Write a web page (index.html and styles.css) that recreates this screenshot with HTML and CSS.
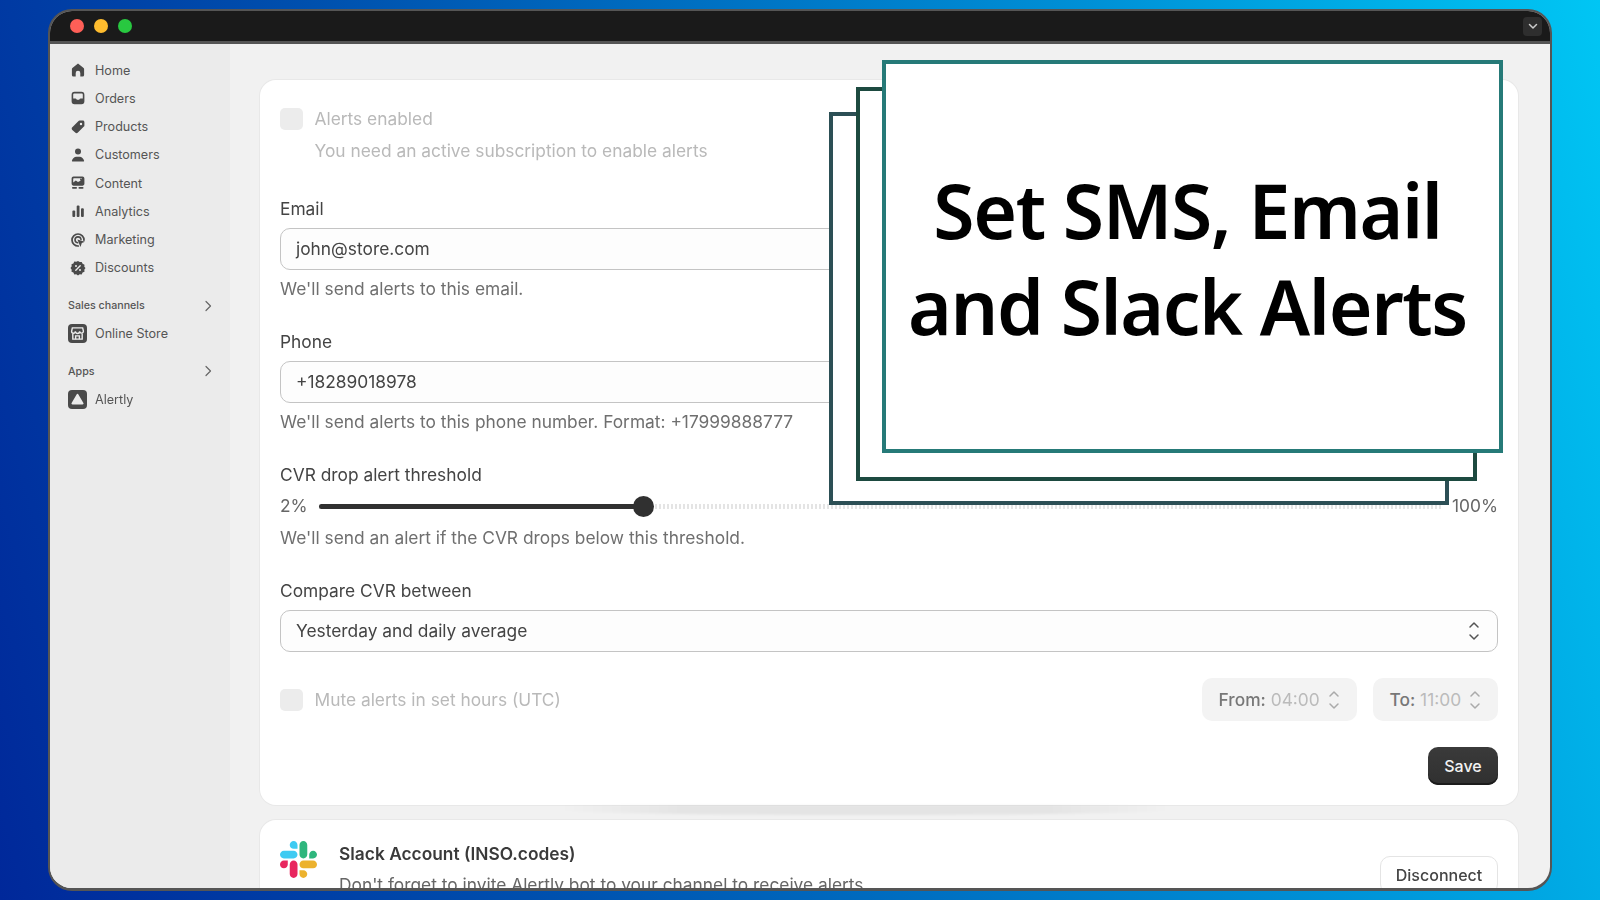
FILE: index.html
```html
<!DOCTYPE html>
<html lang="en">
<head>
<meta charset="utf-8">
<title>Alertly</title>
<link rel="stylesheet" href="styles.css">
</head>
<body>
<div class="window">
  <header class="titlebar">
    <span class="light red"></span><span class="light yellow"></span><span class="light green"></span>
    <span class="tb-menu"><svg width="12" height="12" viewBox="0 0 12 12"><path d="M2.500 4.500 6 8l3.500-3.500" fill="none" stroke="#ccc" stroke-width="1.500" stroke-linecap="round" stroke-linejoin="round"/></svg></span>
  </header>
  <div class="app">
    <nav class="sidebar">
      <a class="nav-item"><svg class="ico" viewBox="0 0 16 16"><path d="M8 1.600 13.600 6c.3.3.5.6.5 1v6a1.600 1.600 0 0 1-1.600 1.600h-2.200V11a2.300 2.300 0 0 0-4.600 0v3.600H3.500A1.600 1.600 0 0 1 1.900 13V7c0-.4.2-.7.5-1z"/></svg>Home</a>
      <a class="nav-item"><svg class="ico" viewBox="0 0 16 16"><path fill-rule="evenodd" d="M4.500 1.800h7A2.900 2.900 0 0 1 14.400 4.700v6.600a2.900 2.900 0 0 1-2.900 2.900h-7a2.900 2.900 0 0 1-2.900-2.900V4.700a2.900 2.900 0 0 1 2.900-2.900zM4.400 3.400c-.7 0-1.200.5-1.200 1.200v3.900h2.300c.4 0 .7.2.9.5l.4.7h2.400l.4-.7c.2-.3.5-.5.9-.5h2.300V4.600c0-.7-.5-1.200-1.200-1.200z"/></svg>Orders</a>
      <a class="nav-item"><svg class="ico" viewBox="0 0 16 16"><path fill-rule="evenodd" d="M9.600 1.600h3.200c.9 0 1.600.7 1.600 1.600v3.200c0 .5-.2.9-.5 1.200l-6 6c-.8.8-2 .8-2.700 0L2.300 11c-.8-.8-.8-2 0-2.700l6-6c.3-.4.8-.7 1.300-.7zM11 3.800a1.200 1.200 0 1 0 0 2.400 1.200 1.200 0 0 0 0-2.400z"/></svg>Products</a>
      <a class="nav-item"><svg class="ico" viewBox="0 0 16 16"><circle cx="8" cy="4.600" r="3"/><path d="M2.400 14.400c-.4 0-.6-.3-.5-.7.5-2.300 2.400-4 4.600-4h3c2.200 0 4.100 1.700 4.600 4 .1.4-.1.7-.5.7z"/></svg>Customers</a>
      <a class="nav-item"><svg class="ico" viewBox="0 0 16 16"><path fill-rule="evenodd" d="M3.500 1.600h9c1 0 1.900.9 1.900 1.900v5.300c0 1-.9 1.900-1.900 1.900h-9c-1 0-1.900-.9-1.900-1.900V3.500c0-1 .9-1.900 1.900-1.900zM3.200 7.400 5.800 5.400l2.200 1.700 2-1 .6-.3-.6-1.400a1 1 0 1 1 2 0V3.300H3.800c-.3 0-.6.300-.6.600z"/><rect x="2" y="12" width="5" height="1.700" rx=".8"/><rect x="8.500" y="12" width="5" height="1.700" rx=".8"/></svg>Content</a>
      <a class="nav-item"><svg class="ico" viewBox="0 0 16 16"><rect x="2.400" y="7.600" width="2.800" height="6.400" rx="1"/><rect x="6.700" y="2.400" width="2.800" height="11.600" rx="1"/><rect x="11" y="5.200" width="2.800" height="8.800" rx="1"/></svg>Analytics</a>
      <a class="nav-item"><svg class="ico" viewBox="0 0 16 16"><path d="M8.300 14A6 6 0 1 1 14 8.200" fill="none" stroke="currentColor" stroke-width="1.700" stroke-linecap="round"/><path d="M7.600 10.800A3 3 0 1 1 11 7.500" fill="none" stroke="currentColor" stroke-width="1.600" stroke-linecap="round"/><path d="M7.400 7.400 15 9.800l-3.200 1.300L10.500 15z"/></svg>Marketing</a>
      <a class="nav-item"><svg class="ico" viewBox="0 0 16 16"><path d="m8 .9 1.700 1.200 2-.2.900 1.900 1.900.9-.2 2L15.500 8l-1.200 1.700.2 2-1.900.9-.9 1.900-2-.2L8 15.500l-1.700-1.200-2 .2-.9-1.900-1.900-.9.2-2L.5 8l1.200-1.700-.2-2 1.900-.9.9-1.900 2 .2z"/><path d="m5.800 10.200 4.400-4.400" stroke="#ebebeb" stroke-width="1.400" stroke-linecap="round"/><circle cx="6" cy="6.100" r="1" fill="#ebebeb"/><circle cx="10" cy="9.900" r="1" fill="#ebebeb"/></svg>Discounts</a>

      <div class="nav-head">Sales channels<svg class="chev" viewBox="0 0 10 12"><path d="M3 1.500 7.500 6 3 10.500"/></svg></div>
      <a class="nav-item app-item"><span class="tile"><svg width="15" height="15" viewBox="0 0 16 16" fill="none" stroke="#ebebeb" stroke-width="1.500"><path d="M2.500 2h11l.8 3.500a2 2 0 0 1-4 .2 2.300 2.300 0 0 1-4.600 0 2 2 0 0 1-4 0z"/><path d="M3 8v6h10V8"/><path d="M6 14v-3.500h4V14"/></svg></span>Online Store</a>

      <div class="nav-head">Apps<svg class="chev" viewBox="0 0 10 12"><path d="M3 1.500 7.500 6 3 10.500"/></svg></div>
      <a class="nav-item app-item"><span class="tile"><svg width="13" height="12" viewBox="0 0 13 12"><path d="M5.600 1.400a1 1 0 0 1 1.800 0l5 8.600a1 1 0 0 1-.9 1.500h-10a1 1 0 0 1-.9-1.500z" fill="#ebebeb"/></svg></span>Alertly</a>
    </nav>

    <main class="main">
      <section class="card form-card">
        <div class="check-row muted"><span class="checkbox"></span>Alerts enabled</div>
        <p class="check-note muted">You need an active subscription to enable alerts</p>

        <div class="label first-label">Email</div>
        <div class="input">john@store.com</div>
        <p class="help">We'll send alerts to this email.</p>

        <div class="label">Phone</div>
        <div class="input">+18289018978</div>
        <p class="help">We'll send alerts to this phone number. Format: +17999888777</p>

        <div class="label">CVR drop alert threshold</div>
        <div class="slider">
          <span class="slider-end">2%</span>
          <div class="track">
            <div class="fill" style="width: 325px"></div>
            <span class="thumb"></span>
          </div>
          <span class="slider-end">100%</span>
        </div>
        <p class="help help-slider">We'll send an alert if the CVR drops below this threshold.</p>

        <div class="label">Compare CVR between</div>
        <div class="input select">Yesterday and daily average
          <svg class="updown" viewBox="0 0 12 20"><path d="M2 6l4-4 4 4M2 14l4 4 4-4"/></svg>
        </div>

        <div class="mute-row">
          <div class="check-row muted"><span class="checkbox"></span>Mute alerts in set hours (UTC)</div>
          <div class="pill pill-from"><b>From:</b>&nbsp;<span>04:00</span><svg class="updown light-arrows" viewBox="0 0 12 20"><path d="M2 6l4-4 4 4M2 14l4 4 4-4"/></svg></div>
          <div class="pill pill-to"><b>To:</b>&nbsp;<span>11:00</span><svg class="updown light-arrows" viewBox="0 0 12 20"><path d="M2 6l4-4 4 4M2 14l4 4 4-4"/></svg></div>
        </div>

        <div class="save-row"><button class="save">Save</button></div>
      </section>

      <section class="card slack-card">
        <svg class="slack" viewBox="0 0 122.800 122.800">
          <path fill="#e8265e" d="M25.800 77.600c0 7.100-5.800 12.900-12.900 12.900S0 84.700 0 77.600s5.800-12.900 12.900-12.900h12.900v12.900zM32.300 77.600c0-7.100 5.800-12.900 12.900-12.900s12.900 5.800 12.900 12.900v32.300c0 7.100-5.800 12.900-12.900 12.900s-12.900-5.800-12.900-12.900V77.600z"/>
          <path fill="#3ecbf2" d="M45.200 25.800c-7.100 0-12.900-5.800-12.900-12.900S38.100 0 45.200 0s12.900 5.800 12.900 12.900v12.900H45.200zM45.200 32.300c7.100 0 12.900 5.800 12.900 12.900s-5.800 12.900-12.900 12.900H12.900C5.800 58.100 0 52.300 0 45.200s5.800-12.900 12.900-12.900h32.300z"/>
          <path fill="#2eb67d" d="M97 45.200c0-7.100 5.800-12.900 12.900-12.900s12.900 5.800 12.900 12.900-5.800 12.900-12.900 12.900H97V45.200zM90.500 45.200c0 7.100-5.800 12.900-12.900 12.900s-12.900-5.800-12.900-12.900V12.900C64.700 5.800 70.500 0 77.600 0s12.900 5.800 12.900 12.900v32.300z"/>
          <path fill="#ecb22e" d="M77.600 97c7.100 0 12.900 5.800 12.900 12.900s-5.800 12.900-12.900 12.900-12.900-5.800-12.900-12.900V97h12.900zM77.600 90.500c-7.100 0-12.900-5.800-12.900-12.900s5.800-12.900 12.900-12.900h32.300c7.100 0 12.900 5.800 12.900 12.900s-5.800 12.900-12.900 12.900H77.600z"/>
        </svg>
        <div class="slack-text">
          <h3>Slack Account (INSO.codes)</h3>
          <p>Don't forget to invite Alertly bot to your channel to receive alerts</p>
        </div>
        <button class="disconnect">Disconnect</button>
      </section>
    </main>
  </div>

  <div class="sheet sheet-back"></div>
  <div class="sheet sheet-mid"></div>
  <div class="sheet sheet-front"><h1>Set SMS, Email<br>and Slack Alerts</h1></div>
</div>
</body>
</html>
```

FILE: styles.css
```css
* { box-sizing: border-box; }
html, body { height: 100%; }
body {
  margin: 0;
  padding: 9px 48px;
  overflow: hidden;
  background: linear-gradient(75deg, #00289a 0%, #0050ae 30%, #0090d6 72%, #00c6f4 100%);
  font-family: Inter, "Liberation Sans", sans-serif;
  color: #333;
}
.window {
  position: relative;
  height: 882px;
  display: flex;
  flex-direction: column;
  overflow: hidden;
  border: solid #555;
  border-width: 2px 2px 3px;
  border-radius: 24px;
  background: #f1f1f1;
}
.titlebar {
  flex: none;
  height: 33px;
  display: flex;
  align-items: center;
  gap: 10px;
  padding: 0 8px 0 20px;
  background: #1a1a1a;
  border-bottom: 3px solid #555;
}
.light { width: 14px; height: 14px; border-radius: 50%; }
.red { background: #ff5f57; }
.yellow { background: #febc2e; }
.green { background: #28c840; }
.tb-menu {
  margin-left: auto;
  width: 19px;
  height: 19px;
  display: flex;
  align-items: center;
  justify-content: center;
  border-radius: 4px;
  background: #2e2e2e;
}
.app { flex: 1; display: flex; min-height: 0; filter: blur(.35px); }

.sidebar {
  flex: none;
  width: 180px;
  padding: 12px 0 0 20px;
  background: #ebebeb;
  color: #555;
  font-size: 12.6px;
}
.nav-item {
  display: flex;
  align-items: center;
  gap: 9px;
  height: 28.25px;
}
.ico { width: 16px; height: 16px; fill: #4a4a4a; color: #4a4a4a; flex: none; }
.nav-head {
  display: flex;
  align-items: center;
  justify-content: space-between;
  width: 145px;
  height: 14px;
  margin: 16.5px 0 7px -2px;
  font-size: 10.7px;
  font-weight: 500;
}
.chev { width: 10px; height: 12px; fill: none; stroke: #666; stroke-width: 1.2; stroke-linecap: round; stroke-linejoin: round; }
.app-item { margin-left: -2px; gap: 8px; }
.tile {
  width: 19px;
  height: 19px;
  flex: none;
  display: flex;
  align-items: center;
  justify-content: center;
  border-radius: 4px;
  background: #4a4a4a;
}

.main { flex: 1; min-width: 0; padding: 36px 32px 0 30px; overflow: hidden; }
.card {
  background: #fff;
  border-radius: 16px;
  box-shadow: 0 0 0 1px #e8e8e8;
}
.form-card {
  position: relative;
  height: 725px;
  padding: 28px 20px 0;
  font-size: 17.35px;
  line-height: 22px;
}
.form-card::after {
  content: "";
  position: absolute;
  left: 300px;
  top: 725px;
  width: 610px;
  height: 10px;
  border-radius: 0 0 50% 50%;
  background: linear-gradient(90deg, rgba(0,0,0,0), rgba(0,0,0,.05) 20%, rgba(0,0,0,.05) 80%, rgba(0,0,0,0));
  filter: blur(1px);
}
.check-row { display: flex; align-items: center; gap: 11.5px; }
.checkbox { width: 23px; height: 22px; border-radius: 5px; background: #ececec; flex: none; }
.muted { color: #b9b9b9; }
.check-note { margin: 10px 0 0 34.5px; }
.label { margin-top: 31px; color: #444; }
.first-label { margin-top: 36px; }
.input {
  height: 42px;
  margin-top: 8px;
  padding: 0 15px;
  display: flex;
  align-items: center;
  border: 1px solid #c4c4c4;
  border-radius: 10px;
  background: #fdfdfd;
  color: #444;
}
.help { margin: 8px 0 0; color: #6f6f6f; }
.slider { display: flex; align-items: center; gap: 11px; height: 22px; margin-top: 9px; color: #666; }
.track {
  position: relative;
  flex: 1;
  height: 5px;
  background: repeating-linear-gradient(90deg, #e4e4e4 0 2px, #fff 2px 4px);
}
.fill { height: 5px; border-radius: 3px; background: #303030; }
.thumb {
  position: absolute;
  left: 314px;
  top: -8px;
  width: 21px;
  height: 21px;
  border-radius: 50%;
  background: #303030;
}
.help-slider { margin-top: 10px; }
.select { justify-content: space-between; }
.updown { width: 12px; height: 20px; fill: none; stroke: #555; stroke-width: 1.500; stroke-linecap: round; stroke-linejoin: round; flex: none; }
.select .updown { margin-right: 2px; }
.mute-row { display: flex; align-items: center; gap: 16px; margin-top: 26px; height: 43px; }
.mute-row .check-row { margin-right: auto; }
.pill {
  height: 43px;
  display: flex;
  align-items: center;
  padding: 0 15px 0 16.5px;
  border-radius: 10px;
  background: #f3f3f3;
  color: #bbb;
}
.pill b { font-weight: 500; color: #777; }
.pill-from { width: 155px; }
.pill-to { width: 125px; }
.light-arrows { margin-left: auto; margin-right: 2px; stroke: #aaa; }
.save-row { display: flex; justify-content: flex-end; margin-top: 26px; }
.save {
  width: 70px;
  height: 38px;
  padding: 0;
  border: 0;
  border-radius: 10px;
  background: linear-gradient(#3a3a3a, #303030);
  box-shadow: inset 0 -2px 0 #1c1c1c;
  color: #f2f2f2;
  font: 500 16px Inter, sans-serif;
}
.slack-card {
  display: flex;
  align-items: flex-start;
  height: 120px;
  margin-top: 15px;
  padding: 21px 20px 0;
}
.slack { width: 37px; height: 37px; flex: none; }
.slack-text { margin-left: 22px; flex: 1; padding-top: 2px; }
.slack-text h3 { margin: 0; font-size: 17.35px; line-height: 22px; font-weight: 600; color: #3a3a3a; }
.slack-text p { margin: 9px 0 0; font-size: 17.35px; line-height: 22px; color: #666; }
.disconnect {
  width: 118px;
  height: 38px;
  margin-top: 15px;
  padding: 0;
  border: 1px solid #e4e4e4;
  border-radius: 10px;
  background: #fff;
  color: #444;
  font: 500 16px Inter, sans-serif;
}

.sheet {
  position: absolute;
  border: 4px solid;
  background: #fff;
}
.sheet-back { left: 779px; top: 101px; width: 620px; height: 393px; border-color: #2c4f55; }
.sheet-mid { left: 806px; top: 76px; width: 621px; height: 394px; border-color: #1d4a40; }
.sheet-front {
  left: 832px;
  top: 49px;
  width: 621px;
  height: 393px;
  border-color: #267a78;
  display: flex;
  justify-content: center;
  padding: 98px 10px 0 0;
}
.sheet-front h1 {
  margin: 0;
  font-family: "Noto Sans", sans-serif;
  font-size: 75px;
  letter-spacing: -1.4px;
  line-height: 96px;
  font-weight: 600;
  color: #000;
  text-align: center;
  white-space: nowrap;
}
```
